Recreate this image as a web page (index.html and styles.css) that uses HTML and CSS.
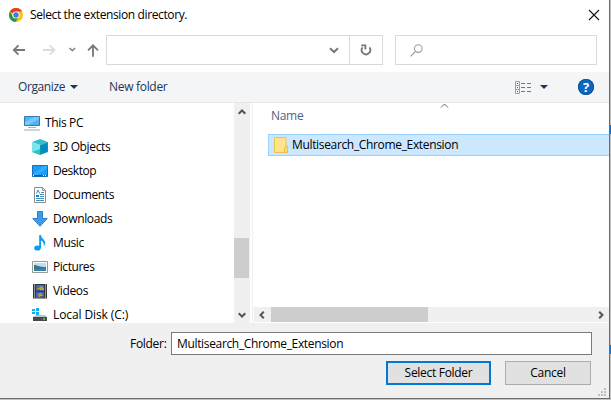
FILE: index.html
```
<!DOCTYPE html>
<html lang="en">
<head>
<meta charset="utf-8">
<title>Select the extension directory.</title>
<link rel="stylesheet" href="styles.css">
</head>
<body>
<div class="desktop">
<main class="dialog">
  <header class="titlebar">
    <svg class="chrome" width="14" height="14" viewBox="0 0 14 14"><circle cx="7" cy="7" r="7" fill="#f9c413"/><path d="M7 7L.9 3.5A7 7 0 0 1 13.1 3.6L7 3.6Z" fill="#e33b2e"/><path d="M.9 3.5A7 7 0 0 0 6.5 14L10 8.7 4 8.7Z" fill="#279847"/><circle cx="7" cy="7" r="3.6" fill="#fff"/><circle cx="7" cy="7" r="2.7" fill="#3b7de8"/></svg>
    <h1 class="title">Select the extension directory.</h1>
    <svg class="close" width="12" height="12" viewBox="0 0 12 12"><path d="M1 1L11 11M11 1L1 11" stroke="#111" stroke-width="1.1"/></svg>
  </header>
  <nav class="navbar">
    <svg class="arrows" width="106" height="30" viewBox="0 0 106 30" fill="none" stroke-width="1.8"><path d="M25 15H14M18.5 10.3L13.8 15L18.5 19.7" stroke="#777"/><path d="M43 15H54M49.7 10.3L54.4 15L49.7 19.7" stroke="#dcdcdc"/><path d="M69.5 13L72.3 15.6L75.1 13" stroke="#888" stroke-width="1.6"/><path d="M93 21.8V11M88 15.3L93 10.3L98 15.3" stroke="#777"/></svg>
    <div class="address">
      <div class="path"><svg width="10" height="7" viewBox="0 0 10 7"><path d="M1 1.2L5 5L9 1.2" fill="none" stroke="#777" stroke-width="2"/></svg></div>
      <div class="refresh"><svg width="12" height="12" viewBox="0 0 12 12" fill="none" stroke="#777" stroke-width="1.8"><path d="M2.6 3.4A4.3 4.3 0 1 0 9.4 3.4"/><path d="M1.2 1.4H5.4V5.6"/></svg></div>
    </div>
    <div class="search"><svg width="13" height="13" viewBox="0 0 13 13" fill="none" stroke="#9b97a2" stroke-width="1.1"><circle cx="8.3" cy="4.6" r="3.8"/><path d="M5.5 7.3L.6 12.4"/></svg></div>
  </nav>
  <div class="toolbar">
    <span class="organize">Organize</span><i class="caret"></i>
    <span class="newfolder">New folder</span>
    <svg class="view" width="17" height="13" viewBox="0 0 17 13"><path d="M.5.5H4.5V12.5H.5ZM.5 4.5H4.5M.5 8.5H4.5" fill="none" stroke="#a0a0a0"/><path d="M2 2H3V3H2Z" fill="#444"/><path d="M2 6H3V7H2Z" fill="#2777d0"/><path d="M2 10H3V11H2Z" fill="#c33"/><path d="M6 2.5H10M12 2.5H16M6 6.5H10M12 6.5H16M6 10.5H10M12 10.5H16" stroke="#777"/></svg>
    <i class="caret"></i>
    <span class="help">?</span>
  </div>
  <section class="content">
    <aside class="tree">
      <div class="item root"><svg width="16" height="16" viewBox="0 0 16 16"><path d="M.5 1.5H15.5V10.5H.5Z" fill="#4bb4fb" stroke="#38799f"/><path d="M1 10V7L10 2H15V4L4 10Z" fill="#78caff"/><path d="M4 12.5H12" stroke="#a2b4bd"/><path d="M0 15H16" stroke="#9baab2"/></svg><span>This PC</span></div>
      <div class="item"><svg width="16" height="16" viewBox="0 0 16 16"><path d="M8 0L16 3L8 6L0 3Z" fill="#35bdcd"/><path d="M0 3L8 6V16L0 13Z" fill="#7be5ec"/><path d="M8 6L16 3V13L8 16Z" fill="#059bb3"/><path d="M9 7L15 5V12L9 14Z" fill="#0789c5"/><path d="M0 13L8 10V16Z" fill="#38bec8"/></svg><span>3D Objects</span></div>
      <div class="item"><svg width="16" height="16" viewBox="0 0 16 16"><path d="M.5 2.5H15.5V13.5H.5Z" fill="#1b9df9" stroke="#1670ad"/><path d="M1 11L12 3H15V5L5 12H1Z" fill="#33adff"/><path d="M1 12.5H15" stroke="#0c5e9a"/><path d="M1 12.5H3M11 12.5H14" stroke="#fff" stroke-dasharray="1 1"/></svg><span class="tight">Desktop</span></div>
      <div class="item"><svg width="16" height="16" viewBox="0 0 16 16"><path d="M2.5.5H10.5L13.5 3.5V15.5H2.5Z" fill="#fff" stroke="#8b8b8b"/><path d="M10.5.5V3.5H13.5" fill="none" stroke="#999"/><path d="M4.3 6.5L6 3L7.7 6.5" fill="none" stroke="#2690d8"/><path d="M9 5.5H12M8 7.5H12M8 9.5H12M4 11.5H12M4 13.5H12" stroke="#418fb9"/><path d="M4 8H7V10H4Z" fill="#2180c2"/></svg><span>Documents</span></div>
      <div class="item"><svg width="16" height="16" viewBox="0 0 16 16"><path d="M5.5.5H10.5V7.5H15.2L8 15.3L.8 7.5H5.5Z" fill="#3c9bea" stroke="#317bc0"/></svg><span>Downloads</span></div>
      <div class="item"><svg width="16" height="16" viewBox="0 0 16 16"><ellipse cx="5.5" cy="13" rx="3.3" ry="2.6" fill="#0b9cf4"/><path d="M7.2 0H9C9.1 3.5 13.4 4.7 13.2 8.2C13.1 9.5 12.2 10.7 11.6 11.2C12.4 8.5 11 6.3 9 5.5V13H7.2Z" fill="#0b9cf4"/></svg><span>Music</span></div>
      <div class="item"><svg width="16" height="16" viewBox="0 0 16 16"><path d="M.5 2.5H15.5V13.5H.5Z" fill="#fff" stroke="#999"/><path d="M2 4H14V12H2Z" fill="#b9ddf5"/><path d="M2 6C5 6 6 8 14 8V10H2Z" fill="#3c7574"/><path d="M2 10L14 8.5V12H2Z" fill="#397fac"/></svg><span class="tight">Pictures</span></div>
      <div class="item"><svg width="16" height="16" viewBox="0 0 16 16"><path d="M1 1H15V15.5H1Z" fill="#383838"/><path d="M2.5 1.5V15M13.5 1.5V15" stroke="#eee" stroke-dasharray="1 1"/><path d="M4 2H12V8H4ZM4 9H12V15H4Z" fill="#366bc0"/><path d="M4 6L7 5L9 3L12 5V7H4ZM6 11L9 10L11 13L7 14Z" fill="#c69b36"/><path d="M4 7H8M8 14H12" stroke="#693f2a"/></svg><span>Videos</span></div>
      <div class="item"><svg width="16" height="16" viewBox="0 0 16 16"><path d="M0 2H3V4H0ZM4 1H7V4H4ZM0 5H3V7H0ZM4 5H7V8H4Z" fill="#10b3ed"/><path d="M4 8H13L15 10H1Z" fill="#bfc3c5"/><path d="M1 10H15V14H1Z" fill="#454a4c"/><path d="M11 12H13" stroke="#42e36a" stroke-width="1.4"/></svg><span class="wide">Local Disk (C:)</span></div>
    </aside>
    <div class="vscroll">
      <svg width="8" height="6" viewBox="0 0 8 6"><path d="M.7 4.8L4 1.5L7.3 4.8" fill="none" stroke="#555" stroke-width="2"/></svg>
      <div class="vthumb"></div>
      <svg class="down" width="8" height="6" viewBox="0 0 8 6"><path d="M.7 1.2L4 4.5L7.3 1.2" fill="none" stroke="#555" stroke-width="2"/></svg>
    </div>
    <div class="files">
      <div class="columns"><span class="colname">Name</span><svg width="9" height="5" viewBox="0 0 9 5"><path d="M1 4.5L4.5 1L8 4.5" fill="none" stroke="#666"/></svg></div>
      <div class="file"><svg width="14" height="16" viewBox="0 0 14 16"><path d="M.5.5H12V15.5H.5Z" fill="#ffe48b" stroke="#e7c34d"/><path d="M10.5 15.5V10.5L13.5 9V15.5Z" fill="#ffdc70" stroke="#e7c34d"/></svg><span class="filename">Multisearch_Chrome_Extension</span></div>
      <div class="hscroll">
        <svg width="6" height="8" viewBox="0 0 6 8"><path d="M4.8.7L1.5 4L4.8 7.3" fill="none" stroke="#555" stroke-width="2"/></svg>
        <div class="hthumb"></div>
        <svg class="right" width="6" height="8" viewBox="0 0 6 8"><path d="M1.2.7L4.5 4L1.2 7.3" fill="none" stroke="#555" stroke-width="2"/></svg>
      </div>
    </div>
  </section>
  <footer class="footer">
    <div class="field"><label class="label">Folder:</label><div class="input"><span class="value">Multisearch_Chrome_Extension</span></div></div>
    <div class="buttons"><button class="btn primary"><span>Select Folder</span></button><button class="btn"><span>Cancel</span></button></div>
    <svg class="grip" width="9" height="9" viewBox="0 0 9 9"><path d="M6 0H8V2H6ZM3 3H5V5H3ZM6 3H8V5H6ZM0 6H2V8H0ZM3 6H5V8H3ZM6 6H8V8H6Z" fill="#bdbdbd"/></svg>
  </footer>
</main>
<div class="behind"><i class="edge"></i><i class="edge low"></i></div>
</div>
</body>
</html>
```
FILE: styles.css
```
* { box-sizing: border-box; }
body { margin: 0; font: 12px/16px "Open Sans", "Noto Sans", sans-serif; color: #000; }
svg { display: block; flex: none; }
span { white-space: nowrap; }
.desktop { display: flex; width: 611px; height: 400px; background: #c3c3c3; overflow: hidden; }
.dialog { display: flex; flex-direction: column; width: 610px; height: 399px; background: #fff; border-right: 1px solid #6c6c6c; border-bottom: 1px solid #6c6c6c; }
.behind { width: 1px; padding-top: 125px; }
.edge { display: block; width: 1px; height: 9px; background: #0870ce; }
.low { margin-top: 211px; }
.titlebar { display: flex; align-items: center; height: 29px; padding: 0 9px; }
.title { margin: 0 0 0 7px; font-size: 12px; font-weight: 400; letter-spacing: -.38px; }
.close { margin-left: auto; }
.navbar { display: flex; height: 43px; padding-top: 6px; }
.address { display: flex; width: 277px; height: 30px; border: 1px solid #d9d9d9; }
.path { display: flex; flex: 1; align-items: center; justify-content: flex-end; padding-right: 10px; }
.refresh { display: flex; width: 33px; align-items: center; justify-content: center; border-left: 1px solid #d9d9d9; }
.search { display: flex; align-items: center; width: 202px; height: 30px; margin-left: 12px; padding-left: 14px; border: 1px solid #d9d9d9; }
.toolbar { display: flex; align-items: center; height: 31px; padding: 0 15px 0 18px; background: #f4f5f7; border-bottom: 1px solid #e6e6e6; color: #1d3657; }
.organize { width: 48px; letter-spacing: -.4px; }
.caret { margin-left: 4px; border: 4px solid transparent; border-top: 4px solid #1d3657; border-bottom: 0; }
.newfolder { margin-left: 31px; letter-spacing: -.3px; }
.view { margin-left: auto; }
.view + .caret { margin-left: 8px; }
.help { width: 16px; height: 16px; margin-left: 30px; border-radius: 50%; background: #0868c7; box-shadow: inset 0 0 0 1px #12518d; color: #fff; font-size: 13px; font-weight: 700; text-align: center; }
.content { display: flex; height: 220px; }
.tree { width: 234px; height: 220px; padding-top: 8px; overflow: hidden; }
.item { display: flex; align-items: center; height: 24px; padding-left: 32px; letter-spacing: -.35px; }
.item span { margin-left: 5px; }
.tight { letter-spacing: -.45px; }
.wide { letter-spacing: -.1px; }
.root { padding-left: 24px; }
.vscroll { display: flex; flex-direction: column; align-items: center; width: 16px; padding: 6px 0 5px; background: #f0f0f0; }
.vthumb { width: 15px; height: 40px; margin: 123px 1px 0 0; background: #cdcdcd; }
.down { margin-top: auto; }
.files { display: flex; flex-direction: column; width: 357px; margin-left: 2px; border-left: 1px solid #f0f0f0; }
.columns { display: flex; height: 31px; padding-left: 18px; color: #4f6380; }
.colname { width: 169px; padding-top: 5px; letter-spacing: -.3px; }
.file { display: flex; align-items: center; height: 22px; margin-left: 15px; padding-left: 5px; background: #cce8ff; border: 1px solid #99d1ff; border-right: 0; }
.filename { margin-left: 4px; letter-spacing: -.34px; }
.hscroll { display: flex; align-items: center; height: 15px; margin: auto 0 1px 1px; padding: 0 5px; background: #f0f0f0; }
.hthumb { width: 157px; height: 15px; margin-left: 6px; background: #cdcdcd; }
.right { margin-left: auto; }
.footer { position: relative; height: 75px; padding-top: 9px; background: #f0f0f0; }
.field { display: flex; align-items: center; height: 23px; padding-left: 130px; }
.label { width: 41px; letter-spacing: -.3px; }
.input { display: flex; align-items: center; width: 421px; height: 23px; padding-left: 5px; background: #fff; border: 1px solid #7a7a7a; }
.value { letter-spacing: -.34px; }
.buttons { display: flex; gap: 14px; padding: 6px 0 0 386px; }
.btn { width: 86px; height: 24px; padding: 0; border: 1px solid #adadad; background: #e1e1e1; color: #000; font: inherit; letter-spacing: -.3px; }
.primary { width: 105px; border: 2px solid #0078d7; }
.grip { position: absolute; right: 2px; bottom: 1px; }
```
